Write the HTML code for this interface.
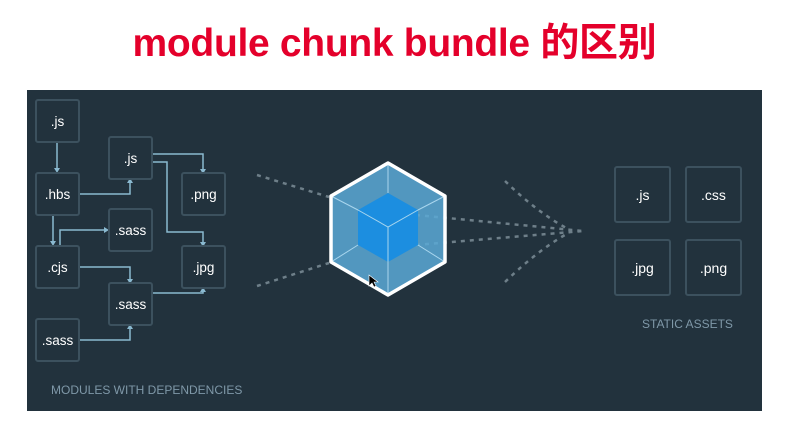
<!DOCTYPE html><html><head><meta charset="utf-8"><style>
body{margin:0;width:789px;height:422px;background:#fff;position:relative;overflow:hidden;font-family:"Liberation Sans",sans-serif}
h1{position:absolute;left:0;width:789px;top:12px;margin:0;text-align:center;padding-right:0px;box-sizing:border-box;color:#e4002b;font:bold 39px "Liberation Sans","Noto Sans CJK SC",sans-serif;letter-spacing:-0.3px}
.p{position:absolute;left:27px;top:90px;width:735px;height:321px;background:#22323d}
.b{position:absolute;width:41px;height:40px;border:2px solid #3c515e;border-radius:3px;color:#fff;font-size:13.5px;display:flex;align-items:center;justify-content:center}
.r{width:53px;height:53px;font-size:14px}
.l{position:absolute;color:#7f98a8;font-size:12px}
svg{position:absolute;left:0;top:0}
</style></head><body>
<h1>module chunk bundle 的区别</h1>
<div class="p"></div>
<svg width="789" height="422">
<g fill="none" stroke="#8ab9d0" stroke-width="1.5">
<path d="M57 143V170M79 194H130V181M152 154H203V170M152 162H167V232H203V243M53 216V243M60 245V230H105M79 267H130V280M152 293H203V290M79 340H130V328"/>
</g>
<g fill="#8ab9d0">
<path d="M54 168h6l-3 5z"/><path d="M127 183h6l-3-5z"/><path d="M200 169h6l-3 5z"/><path d="M200 242h6l-3 5z"/><path d="M50 241h6l-3 5z"/><path d="M104 227v6l5-3z"/><path d="M127 279h6l-3 5z"/><path d="M200 292h6l-3-5z"/><path d="M127 329h6l-3-5z"/>
</g>
<g fill="none" stroke="#6e7f89" stroke-width="2.5" stroke-dasharray="4 5">
<path d="M257 175L329 197M257 286L329 263M416 215L583 231M416 245L583 231M505 181Q540 215 572 231M505 282Q540 248 572 231"/>
</g>
<polygon points="388,163 445,196 445,262 388,295 331,262 331,196" fill="#5aa9d6" fill-opacity=".85"/>
<polygon points="388,193 418,210 418,245 388,262 358,245 358,210" fill="#1c8ee0"/>
<g fill="none" stroke="#a9d6ee" stroke-width="1">
<path d="M331,196L358,210M445,196L418,210M331,262L358,245M445,262L418,245M388,163V193M388,262V295M358,210L388,227L418,210M388,227V262"/>
</g>
<polygon points="388,163 445,196 445,262 388,295 331,262 331,196" fill="none" stroke="#fff" stroke-width="3.5" stroke-linejoin="round"/>
<path d="M369 275l0 11 3-3 2 4 2-1-2-4 4 0z" fill="#000" stroke="#fff" stroke-width=".6"/>
</svg>
<div class="b" style="left:35px;top:99px">.js</div>
<div class="b" style="left:108px;top:136px">.js</div>
<div class="b" style="left:35px;top:172px">.hbs</div>
<div class="b" style="left:181px;top:172px">.png</div>
<div class="b" style="left:108px;top:208px">.sass</div>
<div class="b" style="left:35px;top:245px">.cjs</div>
<div class="b" style="left:181px;top:245px">.jpg</div>
<div class="b" style="left:108px;top:282px">.sass</div>
<div class="b" style="left:35px;top:318px">.sass</div>
<div class="b r" style="left:614px;top:166px">.js</div>
<div class="b r" style="left:685px;top:166px">.css</div>
<div class="b r" style="left:614px;top:239px">.jpg</div>
<div class="b r" style="left:685px;top:239px">.png</div>
<div class="l" style="left:51px;top:383px">MODULES WITH DEPENDENCIES</div>
<div class="l" style="left:642px;top:317px">STATIC ASSETS</div>
</body></html>
